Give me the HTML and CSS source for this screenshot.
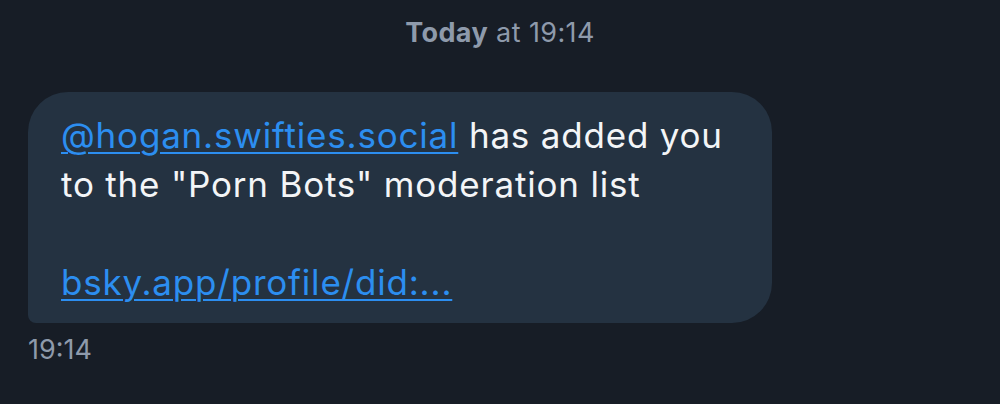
FILE: index.html
```html
<!DOCTYPE html>
<html>
<head>
<meta charset="utf-8">
<link rel="stylesheet" href="styles.css">
</head>
<body>
<div class="chat">
  <div class="day"><span class="day-name">Today</span> at 19:14</div>
  <div class="msg">
    <div class="bubble">
      <p class="text"><a class="link" href="#">@hogan.swifties.social</a> has added you to the "Porn Bots" moderation list</p>
      <p class="text spacer">&nbsp;</p>
      <p class="text"><a class="link" href="#">bsky.app/profile/did:...</a></p>
    </div>
    <div class="time">19:14</div>
  </div>
</div>
</body>
</html>
```
FILE: styles.css
```css
html, body {
  margin: 0;
  padding: 0;
  background: #171d26;
  width: 1000px;
  height: 404px;
  overflow: hidden;
}
.chat {
  font-family: Inter, "Noto Sans", sans-serif;
  display: flex;
  flex-direction: column;
  padding: 16px 0 0 28px;
}
.day {
  text-align: center;
  color: #8e9aab;
  font-size: 27px;
  letter-spacing: 0.4px;
  line-height: 34px;
  margin-right: 28px;
}
.day-name {
  font-weight: 700;
}
.msg {
  margin-top: 42px;
  display: flex;
  flex-direction: column;
  align-items: flex-start;
}
.bubble {
  background: #243241;
  width: 744px;
  box-sizing: border-box;
  padding: 19px 32px 16px 33px;
  border-radius: 40px 40px 40px 8px;
}
.text {
  margin: 0;
  color: #f3f5f7;
  font-size: 35px;
  letter-spacing: 0.8px;
  line-height: 49px;
  width: 680px;
}
.link {
  color: #2c8ef0;
  text-decoration: underline;
  text-decoration-thickness: 2px;
  text-underline-offset: 4px;
}
.time {
  margin-top: 12px;
  color: #8e9aab;
  font-size: 27px;
  line-height: 30px;
}
```
